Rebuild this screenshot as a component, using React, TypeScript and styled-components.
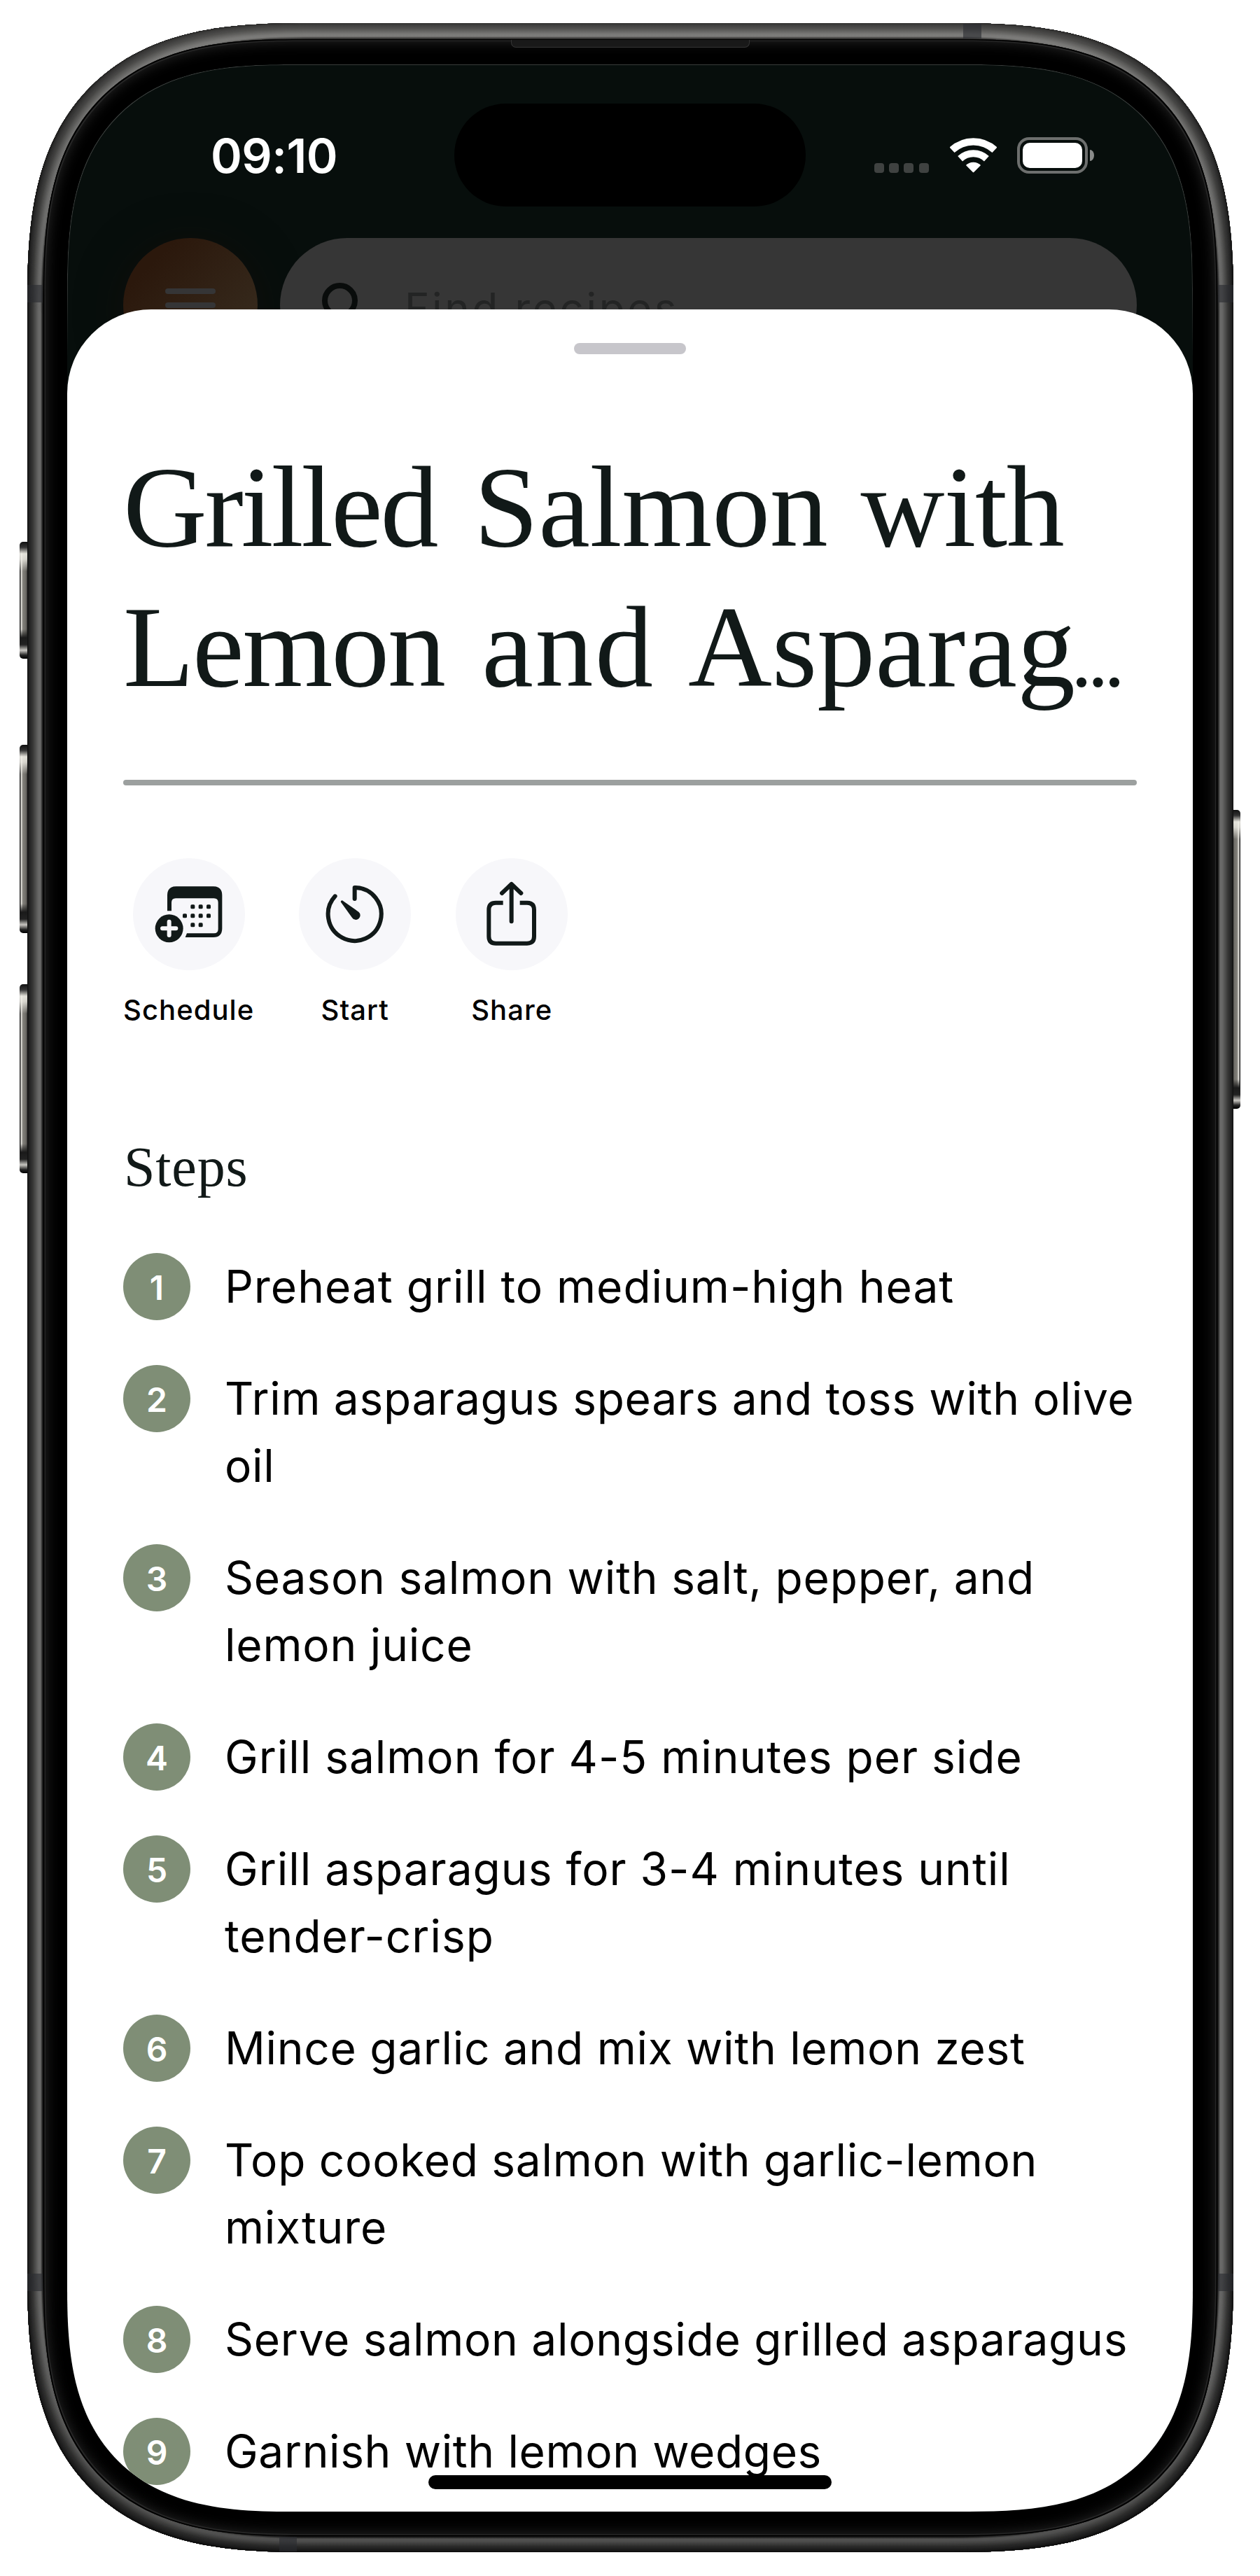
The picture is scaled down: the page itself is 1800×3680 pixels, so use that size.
import React from "react";
import styled, { createGlobalStyle } from "styled-components";

const INK = "#111918";
const SANS = 'Inter, "Liberation Sans", sans-serif';
const SERIF = '"Liberation Serif", serif';

/* Brightness of the metal band by distance from its outer edge, in px. */
const bandProfile: [number, number][] = [
  [0, 0.12], [2, 0.28], [4, 0.36], [8, 0.52], [12, 0.76],
  [16, 0.98], [19, 1], [21, 0.45], [23, 0.05],
];
const brightnessAt = (d: number) => {
  const i = Math.max(1, bandProfile.findIndex(([x]) => x >= d));
  const [x0, y0] = bandProfile[i - 1];
  const [x1, y1] = bandProfile[i];
  return y0 + ((y1 - y0) * (d - x0)) / (x1 - x0);
};
/* One-pixel rings, outermost first so that it stays on top of the wider ones. */
const bandRings = (() => {
  const rings: string[] = [];
  for (let d = 0; d < 23; d++) {
    const v = Math.round(brightnessAt(d + 0.5) * 106);
    rings.push(`inset 0 0 0 ${d + 1}px rgb(${v},${v},${Math.round(v * 0.99)})`);
  }
  return rings.join(",");
})();

const GlobalStyle = createGlobalStyle`
  *, *::before, *::after { box-sizing: border-box; }
  body { margin: 0; background: #fff; font-family: ${SANS}; color: #000; }
  h1, h2, ol, p { margin: 0; padding: 0; font-weight: 400; }
`;

const Stage = styled.main`
  width: 1800px;
  height: 3680px;
  padding: 33px 38.5px;
  background: #fff;
`;

const Phone = styled.div`
  position: relative;
  height: 3613px;
`;

const Frame = styled.div`
  position: relative;
  height: 100%;
  padding: 23px;
  border-radius: 400px;
  corner-shape: superellipse(1.43);
  background: #000;
  box-shadow: ${bandRings};
`;

/* Light falling on the band from above, fading towards the bottom edge. */
const Sheen = styled.div`
  position: absolute;
  inset: 0;
  border-radius: 400px;
  corner-shape: superellipse(1.43);
  background: linear-gradient(
    rgba(250, 246, 238, 0.14) 0,
    rgba(250, 246, 238, 0.1) 60px,
    rgba(255, 255, 255, 0) 360px,
    rgba(0, 0, 0, 0) 3200px,
    rgba(0, 0, 0, 0.25) 3613px
  );
`;

const Bezel = styled.div`
  position: relative;
  height: 100%;
  padding: 36px 34.5px 34.5px;
  border-radius: 366px;
  corner-shape: superellipse(1.43);
  background: #000;
  box-shadow: inset 0 0 0 1.5px #000, inset 0 0 0 3px #262626,
    inset 0 0 20px 2px #2b2b2b;
`;

const Speaker = styled.div`
  position: absolute;
  top: 1px;
  left: 668px;
  width: 341px;
  height: 11px;
  background: #191919;
  border: 1px solid #343434;
  border-top: 0;
  border-radius: 0 0 7px 7px;
`;

const AntennaBand = styled.div<{ $x: number; $y: number; $w: number; $h: number }>`
  position: absolute;
  left: ${p => p.$x}px;
  top: ${p => p.$y}px;
  width: ${p => p.$w}px;
  height: ${p => p.$h}px;
  background: rgba(42, 44, 48, 0.62);
`;

const SideButton = styled.div<{ $side: "left" | "right"; $top: number; $height: number }>`
  position: absolute;
  ${p => p.$side}: -10.5px;
  top: ${p => p.$top}px;
  width: 14px;
  height: ${p => p.$height}px;
  border-radius: ${p => (p.$side === "left" ? "5px 0 0 5px" : "0 5px 5px 0")};
  background:
    linear-gradient(
      #111 0, #333 8px, rgba(240, 238, 230, 0.9) 17px, rgba(240, 238, 230, 0.8) 25px,
      rgba(120, 118, 112, 0) 42px, rgba(120, 118, 112, 0) calc(100% - 42px),
      #1a1a1a calc(100% - 30px), #222 calc(100% - 20px), #c9c7c2 calc(100% - 12px),
      #222 calc(100% - 5px), #000 100%
    ),
    linear-gradient(
      ${p => (p.$side === "left" ? "to right" : "to left")},
      #222 0, #222 1px, #dddbd5 2px, #dddbd5 3px, #85837d 4.5px, #6d6b66 9px, #4a4946 10.5px
    );
`;

const Screen = styled.div`
  position: relative;
  height: 3496px;
  border-radius: 320px;
  corner-shape: superellipse(1.43);
  overflow: hidden;
  background: #070e0c;
`;

const ScreenEdge = styled.div`
  position: absolute;
  inset: 0;
  border-radius: 320px;
  corner-shape: superellipse(1.43);
  box-shadow: inset 0 0 0 1px #3a3d3c;
  mask-image: linear-gradient(#000 300px, transparent 420px);
`;

const Backdrop = styled.div`
  position: absolute;
  inset: 0;
  padding-top: 56px;
`;

const StatusBar = styled.div`
  display: grid;
  grid-template-columns: 1fr 502px 1fr;
  align-items: center;
  height: 147px;
`;

const Clock = styled.div`
  padding: 1px 0 0 205px;
  font-size: 68px;
  line-height: 80px;
  font-weight: 600;
  letter-spacing: -0.5px;
  color: #fff;
`;

const Island = styled.div`
  height: 147px;
  border-radius: 74px;
  background: #000;
`;

const StatusIcons = styled.div`
  display: flex;
  justify-content: flex-end;
  align-items: center;
  height: 52px;
  padding-right: 141px;
`;

const SignalDots = styled.div`
  display: flex;
  align-self: flex-end;
  gap: 7.3px;
  padding-bottom: 1px;
  margin-right: 30px;
`;

const SignalDot = styled.i`
  width: 14px;
  height: 14px;
  border-radius: 4px;
  background: #3f4241;
`;

const WifiIcon = styled.svg`
  width: 67px;
  height: 50px;
  margin-right: 29.5px;
`;

const Battery = styled.div`
  width: 101px;
  height: 52px;
  padding: 4px;
  border: 4px solid #6d6f6e;
  border-radius: 17px;
`;

const BatteryLevel = styled.div`
  height: 100%;
  border-radius: 10px;
  background: #fff;
`;

const BatteryTip = styled.div`
  width: 6px;
  height: 16px;
  margin-left: 3px;
  border-radius: 0 6px 6px 0 / 0 8px 8px 0;
  background: #8a8c8b;
`;

const SearchRow = styled.div`
  display: flex;
  gap: 32px;
  padding: 45px 80px 0;
`;

const MenuButton = styled.div`
  display: flex;
  flex-direction: column;
  align-items: center;
  justify-content: center;
  gap: 12px;
  width: 192px;
  height: 192px;
  border-radius: 50%;
  background: linear-gradient(135deg, #2b180c 20%, #35281b 75%);
  box-shadow: 0 8px 70px rgba(30, 14, 8, 0.35);
`;

const MenuLine = styled.i`
  width: 72px;
  height: 8px;
  border-radius: 4px;
  background: #353536;
`;

const SearchField = styled.div`
  display: flex;
  align-items: center;
  flex: 1;
  height: 192px;
  padding: 8px 0 0 60px;
  border-radius: 96px;
  background: #363636;
  font-size: 60px;
  line-height: 72px;
  letter-spacing: 3.7px;
  color: #232424;
`;

const SearchGlass = styled.svg`
  width: 72px;
  height: 72px;
  margin-right: 46px;
`;

const Sheet = styled.section`
  position: relative;
  height: 3146.5px;
  margin-top: 349.5px;
  padding: 48px 80px 0;
  border-radius: 120px 120px 0 0;
  background: #fff;
`;

const Grabber = styled.div`
  width: 160px;
  height: 16px;
  margin: 0 auto;
  border-radius: 8px;
  background: #c7c6cb;
`;

const Title = styled.h1`
  margin-top: 118px;
  font-family: ${SERIF};
  font-size: 166px;
  line-height: 200px;
  color: ${INK};
`;

const TitleLine = styled.span`
  display: block;
  white-space: nowrap;
`;

const Word = styled.span<{ $tracking?: number; $lead?: number }>`
  margin-left: ${p => p.$lead ?? 0}px;
  letter-spacing: ${p => p.$tracking ?? 0}px;
`;

const Dots = styled.span`
  margin-left: -6px;
  font-size: 120px;
  line-height: 0;
  letter-spacing: -6.5px;
`;

const Divider = styled.div`
  height: 8px;
  margin-top: 90px;
  border-radius: 4px;
  background: #9ca09f;
`;

const Actions = styled.div`
  display: flex;
  gap: 64px;
  margin-top: 104px;
`;

const Action = styled.div`
  display: flex;
  flex-direction: column;
  align-items: center;
  gap: 33px;
`;

const ActionIcon = styled.svg`
  width: 160px;
  height: 160px;
  border-radius: 50%;
  background: #f7f7fa;
`;

const ActionLabel = styled.span`
  font-size: 40px;
  line-height: 48px;
  font-weight: 500;
  letter-spacing: 1.05px;
`;

const SectionTitle = styled.h2`
  margin-top: 152px;
  padding-left: 1px;
  font-family: ${SERIF};
  font-size: 80px;
  line-height: 96px;
  letter-spacing: 0.8px;
  color: ${INK};
`;

const StepList = styled.ol`
  display: flex;
  flex-direction: column;
  gap: 64px;
  margin-top: 75px;
  list-style: none;
`;

const Step = styled.li`
  display: flex;
  align-items: flex-start;
  gap: 49px;
`;

const Badge = styled.span`
  display: flex;
  align-items: center;
  justify-content: center;
  flex: none;
  width: 96px;
  height: 96px;
  padding-top: 4px;
  border-radius: 50%;
  background: #7f8e76;
  color: #fff;
  font-size: 48px;
  line-height: 56px;
  font-weight: 600;
`;

const StepText = styled.p<{ $tracking: number }>`
  font-size: 64px;
  line-height: 96px;
  white-space: pre;
  letter-spacing: ${p => p.$tracking}px;
`;

const HomeIndicator = styled.div`
  position: absolute;
  left: 516px;
  bottom: 32px;
  width: 576px;
  height: 20px;
  border-radius: 10px;
  background: #000;
`;

const steps: { text: string; tracking: number }[] = [
  { text: "Preheat grill to medium-high heat", tracking: 0.98 },
  { text: "Trim asparagus spears and toss with olive\noil", tracking: 0.7 },
  { text: "Season salmon with salt, pepper, and\nlemon juice", tracking: 0.8 },
  { text: "Grill salmon for 4-5 minutes per side", tracking: 0.97 },
  { text: "Grill asparagus for 3-4 minutes until\ntender-crisp", tracking: 0.98 },
  { text: "Mince garlic and mix with lemon zest", tracking: 0.7 },
  { text: "Top cooked salmon with garlic-lemon\nmixture", tracking: 0.72 },
  { text: "Serve salmon alongside grilled asparagus", tracking: 0.72 },
  { text: "Garnish with lemon wedges", tracking: 0.62 },
];

const calendarDots = [
  [256, 208], [290, 208], [324, 208],
  [222, 247], [256, 247], [290, 247], [324, 247],
  [256, 286], [290, 286],
];

const ScheduleIcon = () => (
  <ActionIcon viewBox="0 0 480 480" fill={INK}>
    <path d="M147 226V159Q147 121 185 121H344Q382 121 382 159V301Q382 339 344 339H224L231 322H347Q365 322 365 304V190Q365 172 347 172H183Q165 172 165 190V226Z" />
    {calendarDots.map(([x, y]) => (
      <rect key={`${x}-${y}`} x={x - 9} y={y - 9} width="18" height="18" rx="5" />
    ))}
    <circle cx="155" cy="301" r="60" />
    <path d="M155 272V330M126 301H184" stroke="#f7f7fa" strokeWidth="18" strokeLinecap="round" />
  </ActionIcon>
);

const TimerIcon = () => (
  <ActionIcon viewBox="0 0 480 480" fill="none">
    <path
      d="M239 174V126A114 114 0 1 1 155 163"
      stroke={INK} strokeWidth="18" strokeLinecap="round" strokeLinejoin="round"
    />
    <path d="M181 190L228 255A19 19 0 1 0 256 230L189 183A5 5 0 0 0 181 190Z" fill={INK} />
  </ActionIcon>
);

const ShareIcon = () => (
  <ActionIcon viewBox="0 0 480 480" fill="none" stroke={INK} strokeWidth="18">
    <path d="M203 191H172Q142 191 142 221V335Q142 365 172 365H306Q336 365 336 335V221Q336 191 306 191H275" />
    <path d="M239 112V271M198 150L239 111L280 150" strokeLinecap="round" strokeLinejoin="round" />
  </ActionIcon>
);

export default function App() {
  return (
    <Stage>
      <GlobalStyle />
      <Phone>
        <SideButton $side="left" $top={741} $height={167} />
        <SideButton $side="left" $top={1031} $height={269} />
        <SideButton $side="left" $top={1373} $height={270} />
        <SideButton $side="right" $top={1123.5} $height={427} />
        <Frame>
          <Sheen />
          <AntennaBand $x={1337} $y={1} $w={26} $h={21} />
          <AntennaBand $x={0} $y={374} $w={22} $h={25} />
          <AntennaBand $x={1701} $y={374} $w={22} $h={25} />
          <AntennaBand $x={0} $y={3215} $w={22} $h={25} />
          <AntennaBand $x={1701} $y={3215} $w={22} $h={25} />
          <AntennaBand $x={360} $y={3591} $w={25} $h={21} />
          <Bezel>
            <Speaker />
            <Screen>
              <Backdrop>
                <StatusBar>
                  <Clock>09:10</Clock>
                  <Island />
                  <StatusIcons>
                    <SignalDots>
                      <SignalDot />
                      <SignalDot />
                      <SignalDot />
                      <SignalDot />
                    </SignalDots>
                    <WifiIcon viewBox="0 0 200 150" fill="none" stroke="#fff">
                      <path d="M8.6 52A134 134 0 0 1 191.4 52" strokeWidth="31" />
                      <path d="M43.4 89.3A83 83 0 0 1 156.6 89.3" strokeWidth="30" />
                      <path d="M100 146L71 117A44 44 0 0 1 129 117Z" fill="#fff" strokeWidth="4" strokeLinejoin="round" />
                    </WifiIcon>
                    <Battery>
                      <BatteryLevel />
                    </Battery>
                    <BatteryTip />
                  </StatusIcons>
                </StatusBar>
                <SearchRow>
                  <MenuButton>
                    <MenuLine />
                    <MenuLine />
                    <MenuLine />
                  </MenuButton>
                  <SearchField>
                    <SearchGlass viewBox="0 0 72 72" fill="none" stroke="#090c0b" strokeWidth="8">
                      <circle cx="25.5" cy="25.5" r="21.5" />
                      <path d="M41 41L64 64" strokeLinecap="round" />
                    </SearchGlass>
                    Find recipes
                  </SearchField>
                </SearchRow>
              </Backdrop>
              <ScreenEdge />
              <Sheet>
                <Grabber />
                <Title>
                  <TitleLine>
                    <Word $tracking={-3.3}>Grilled</Word>{" "}
                    <Word $tracking={-0.3} $lead={12.5}>Salmon</Word>{" "}
                    <Word $tracking={-1.3} $lead={5.5}>with</Word>
                  </TitleLine>
                  <TitleLine>
                    <Word $tracking={-2.3}>Lemon</Word>{" "}
                    <Word $tracking={2.5} $lead={12}>and</Word>{" "}
                    <Word $lead={6}>Asparag</Word>
                    <Dots>...</Dots>
                  </TitleLine>
                </Title>
                <Divider />
                <Actions>
                  <Action>
                    <ScheduleIcon />
                    <ActionLabel>Schedule</ActionLabel>
                  </Action>
                  <Action>
                    <TimerIcon />
                    <ActionLabel>Start</ActionLabel>
                  </Action>
                  <Action>
                    <ShareIcon />
                    <ActionLabel>Share</ActionLabel>
                  </Action>
                </Actions>
                <SectionTitle>Steps</SectionTitle>
                <StepList>
                  {steps.map((step, i) => (
                    <Step key={step.text}>
                      <Badge>{i + 1}</Badge>
                      <StepText $tracking={step.tracking}>{step.text}</StepText>
                    </Step>
                  ))}
                </StepList>
              </Sheet>
              <HomeIndicator />
            </Screen>
          </Bezel>
        </Frame>
      </Phone>
    </Stage>
  );
}
